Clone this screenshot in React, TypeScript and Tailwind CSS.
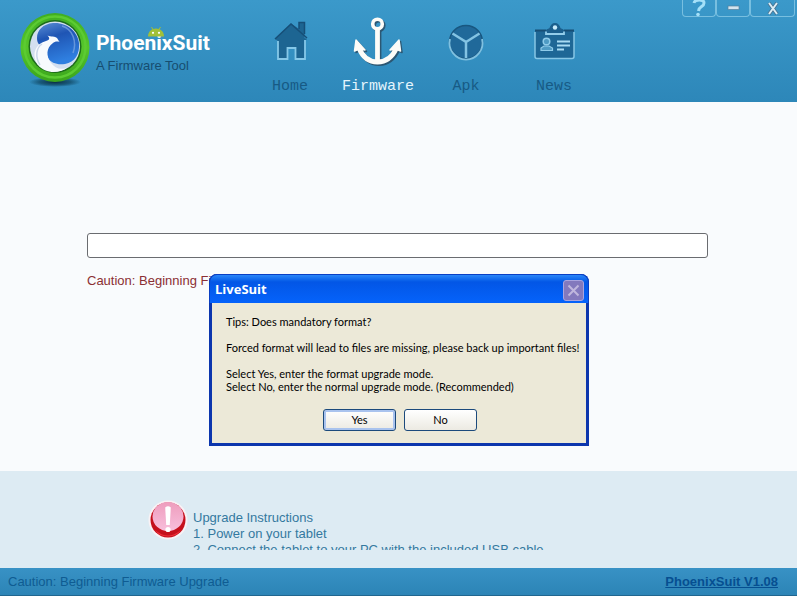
import type { ReactNode } from "react";

function Logo() {
  return (
    <svg width="76" height="78" viewBox="16 10 76 78" aria-hidden="true">
      <defs>
        <linearGradient id="ring" x1="0" y1="0" x2="0" y2="1">
          <stop offset="0" stopColor="#3fae22" />
          <stop offset="0.5" stopColor="#56c62a" />
          <stop offset="1" stopColor="#3aa41c" />
        </linearGradient>
        <linearGradient id="globe" x1="0" y1="0" x2="0.3" y2="1">
          <stop offset="0" stopColor="#5c8fd6" />
          <stop offset="0.4" stopColor="#1f55b4" />
          <stop offset="1" stopColor="#2f7fe0" />
        </linearGradient>
        <radialGradient id="logoShadow">
          <stop offset="0" stopColor="#0b2b3f" />
          <stop offset="0.6" stopColor="#0f4560" stopOpacity="0.7" />
          <stop offset="1" stopColor="#0f4560" stopOpacity="0" />
        </radialGradient>
      </defs>
      <ellipse cx="55" cy="82" rx="26" ry="5" fill="url(#logoShadow)" />
      <circle cx="55" cy="47.500" r="34.500" fill="url(#ring)" />
      <circle cx="55" cy="47" r="30.500" fill="none" stroke="#5ccb32" strokeWidth="2.500" />
      <circle cx="55" cy="46.500" r="26.500" fill="#1d6b1c" />
      <circle cx="55" cy="46.500" r="25" fill="#d3dff0" />
      <path d="M37 38C37 30 43 24 53 23C67 22 78 32 79 43C80 54 75 62 65 64C57 65 51 63 48 58L44 46C40 46 37 44 37 38Z" fill="url(#globe)" />
      <path d="M62 26C73 29 77 42 73 53" fill="none" stroke="#7fa8e2" strokeWidth="1.500" opacity="0.700" />
      <path d="M38 65C31 55 35 44 46 41C50 40 50 38 47.500 35.500C51 37 55 36 57 38L59.500 42C57 41 54 42 53 43C46 48 46 56 51 63C55 68 61 71 68 67C60 74 45 74 38 65Z" fill="#f7fafd" />
      <path d="M42 44C36 48 35 57 40 65" fill="none" stroke="#c9d7ea" strokeWidth="1.500" />
    </svg>
  );
}

function AndroidHead() {
  return (
    <svg className="absolute top-4 left-[51px]" width="18" height="11" viewBox="0 0 18 11" aria-hidden="true">
      <path d="M1 10.500C1 5.500 4.500 2.500 9 2.500S17 5.500 17 10.500Z" fill="#a2c037" />
      <path d="M4.500 1L6 3.500M13.500 1L12 3.500" stroke="#a2c037" />
      <circle cx="6" cy="6.800" r="1.100" fill="#fff" />
      <circle cx="12" cy="6.800" r="1.100" fill="#fff" />
    </svg>
  );
}

function HomeIcon() {
  return (
    <svg width="48" height="50" viewBox="0 0 48 50" fill="none" aria-hidden="true">
      <path d="M38.500 21V6H33V12L25 6.500L9 22L12 24V42H21.500V31H29.500V42H39V24L41 22Z" fill="#1d6592" />
      <path d="M12 24V42H21.500V31H29.500V42H39V23" stroke="#86c8e8" strokeWidth="1.800" />
      <path d="M9 22L25 7L41 21M33 12V5.500H38.500V17" stroke="#164f78" strokeWidth="1.500" />
    </svg>
  );
}

function AnchorShape() {
  return (
    <>
      <circle cx="23.500" cy="7" r="4.800" strokeWidth="3.600" />
      <path d="M23.500 12V45" strokeWidth="4.800" />
      <path d="M5 31C9 41 16 45 23.500 45S38 41 42.500 31" strokeWidth="4.800" />
      <path d="M2 23L0.500 34L5 32L11 33ZM45 23L46.500 34L42 32L36 33Z" strokeWidth="1.500" />
    </>
  );
}

function AnchorIcon() {
  return (
    <svg className="overflow-visible" width="48" height="50" viewBox="0 0 48 50" strokeLinejoin="round" aria-hidden="true">
      <g transform="translate(1.500 1.500)" stroke="#2b4a60" fill="none" opacity="0.800"><AnchorShape /></g>
      <g stroke="#fdfcf8" fill="none"><AnchorShape /></g>
      <path d="M2 23L0.500 34L5 32L11 33ZM45 23L46.500 34L42 32L36 33Z" fill="#fdfcf8" />
    </svg>
  );
}

function ApkIcon() {
  return (
    <svg width="48" height="50" viewBox="0 0 48 50" fill="none" aria-hidden="true">
      <circle cx="24" cy="25" r="16.500" fill="#20699a" stroke="#185780" strokeWidth="1.500" />
      <path d="M8 22A16.500 16.500 0 1 0 40 22" stroke="#7fc0e0" strokeWidth="1.800" />
      <path d="M24 41V25L10.500 16.500M24 25L37.500 16.500" stroke="#83c3e3" strokeWidth="2.500" />
    </svg>
  );
}

function NewsIcon() {
  return (
    <svg width="48" height="50" viewBox="0 0 48 50" fill="none" aria-hidden="true">
      <rect x="5" y="13" width="39" height="28" rx="2" fill="#1e6796" />
      <path d="M5 15V39.500Q5 41.500 7 41.500H42Q44 41.500 44 39.500V15" stroke="#86c6e5" strokeWidth="1.500" />
      <path d="M5 13.500H16M34 13.500H44" stroke="#174f76" strokeWidth="2" />
      <path d="M16 14C16 11.500 19 12 19.500 11C20.500 8 22 6 25 6S29.500 8 30.500 11C31 12 34 11.500 34 14V17H16Z" fill="#1b5f8d" />
      <path d="M16 14.500V17H34V14.500" stroke="#93cdea" strokeWidth="1.800" />
      <circle cx="25" cy="10.500" r="2.200" fill="#c9ecfb" />
      <circle cx="16.500" cy="24.500" r="3.300" stroke="#8fcbe9" strokeWidth="1.500" fill="#4f9bc4" />
      <path d="M11 33.500V31L14 29H19L22.500 31V33.500Z" stroke="#8fcbe9" strokeWidth="1.200" fill="#4f9bc4" />
      <path d="M27 24.500H40M27 28.500H40M27 32.500H34" stroke="#a8dcf3" strokeWidth="1.800" />
    </svg>
  );
}

function AlertIcon() {
  return (
    <svg width="40" height="42" viewBox="0 0 40 42" aria-hidden="true">
      <defs>
        <linearGradient id="gloss" x1="0" y1="0" x2="0" y2="1">
          <stop offset="0" stopColor="#ee9dbd" />
          <stop offset="1" stopColor="#f8bfdc" />
        </linearGradient>
      </defs>
      <circle cx="20" cy="21" r="19.500" fill="#f9f2f5" />
      <circle cx="20" cy="21" r="17.500" fill="#c5101c" />
      <path d="M7 31Q20 42 33 31Q29 37.500 20 37.500T7 31Z" fill="#f0303a" />
      <ellipse cx="20" cy="17.500" rx="15.500" ry="14.500" fill="url(#gloss)" />
      <path d="M17.200 8.500Q20 6 22.800 8.500L21.800 26H18.200Z" fill="#fff" />
      <circle cx="20" cy="30.500" r="2.600" fill="#fff" />
    </svg>
  );
}

function NavItem({ label, icon, active = false }: { label: string; icon: ReactNode; active?: boolean }) {
  return (
    <button type="button" className={`flex w-[88px] flex-col items-center gap-2 font-['Liberation_Mono',monospace] text-[15px] leading-6 ${active ? "text-[#e4f5fd]" : "text-[#175a85]"}`}>
      {icon}
      <span>{label}</span>
    </button>
  );
}

function WindowButton({ label, wide = false, children }: { label: string; wide?: boolean; children: ReactNode }) {
  return (
    <button type="button" aria-label={label} className={`flex h-[17px] items-center justify-center rounded-b-sm border border-t-0 border-[#78bfe0] ${wide ? "w-[45px]" : "w-[34px]"}`}>
      {children}
    </button>
  );
}

function DialogButton({ focused = false, children }: { focused?: boolean; children: ReactNode }) {
  return (
    <button type="button" className={`h-[22px] w-[73px] rounded-[3px] border border-[#1c4a7c] bg-linear-to-b from-white to-[#eceae2] text-center leading-5 ${focused ? "inset-ring-2 inset-ring-[#a9c3ee]" : ""}`}>
      {children}
    </button>
  );
}

function Dialog() {
  return (
    <div className="absolute inset-0 flex items-start justify-center pt-[274px] pl-px">
      <section role="dialog" aria-labelledby="dialog-title" className="w-[380px] rounded-t-lg border-x-[3px] border-b-[3px] border-[#0c36ad] bg-[#0c36ad] font-['Lato',sans-serif] text-[11px] text-black">
        <header className="-mx-[3px] flex h-[29px] items-center justify-between rounded-t-lg border-x border-t border-[#0a3fc4] bg-linear-to-b from-[#2a86f8] via-[#0356e6] via-25% to-[#0563fb] pt-0.5 pr-1 pl-[5px]">
          <h1 id="dialog-title" className="font-['Open_Sans',sans-serif] text-[13px] font-bold text-white">LiveSuit</h1>
          <button type="button" aria-label="Close" className="flex size-[21px] items-center justify-center rounded-[3px] border border-[#a9a4de] bg-[#8379bd]">
            <svg width="13" height="13" viewBox="0 0 13 13" aria-hidden="true"><path d="M1.500 1.500L11.500 11.500M11.500 1.500L1.500 11.500" stroke="#c0b7dd" strokeWidth="2" /></svg>
          </button>
        </header>
        <div className="flex flex-col bg-[#ece9d8] pt-3 pr-3 pb-3 pl-[14px] leading-[13px] whitespace-nowrap">
          <p className="mb-[13px]">Tips: Does mandatory format?</p>
          <p className="mb-[13px]">Forced format will lead to files are missing, please back up important files!</p>
          <p>Select Yes, enter the format upgrade mode.</p>
          <p>Select No, enter the normal upgrade mode. (Recommended)</p>
          <div className="mt-4 flex justify-center gap-2">
            <DialogButton focused>Yes</DialogButton>
            <DialogButton>No</DialogButton>
          </div>
        </div>
      </section>
    </div>
  );
}

export default function App() {
  return (
    <div className="relative flex min-h-screen flex-col bg-[#f9fbfd] font-['Liberation_Sans',sans-serif] text-[13px]">
      <header className="flex h-[102px] items-start bg-linear-to-b from-[#3b99ca] to-[#2d87b9] pl-4">
        <div className="flex w-[230px] pt-[10px]">
          <Logo />
          <div className="relative ml-1 pt-[18px]">
            <AndroidHead />
            <p className="font-['Roboto',sans-serif] text-[21px] leading-[30px] font-bold text-white">PhoenixSuit</p>
            <p className="leading-4 text-[#174d70]">A Firmware Tool</p>
          </div>
        </div>
        <nav className="flex pt-[17px]">
          <NavItem label="Home" icon={<HomeIcon />} />
          <NavItem label="Firmware" icon={<AnchorIcon />} active />
          <NavItem label="Apk" icon={<ApkIcon />} />
          <NavItem label="News" icon={<NewsIcon />} />
        </nav>
        <div className="mr-0.5 ml-auto flex">
          <WindowButton label="Help">
            <svg width="14" height="17" viewBox="0 0 14 17" fill="none" aria-hidden="true"><path d="M2 3C3 -1 12 -1 12 3C12 7 7 6 6.500 11" stroke="#a5e0f8" strokeWidth="3" /><circle cx="6" cy="14.500" r="1.800" fill="#a5e0f8" /></svg>
          </WindowButton>
          <WindowButton label="Minimize">
            <svg width="13" height="6" viewBox="0 0 13 6" aria-hidden="true"><rect x="1" y="1" width="11" height="3.500" fill="#d3e5ef" stroke="#54809c" strokeWidth="0.700" /></svg>
          </WindowButton>
          <WindowButton label="Close window" wide>
            <svg width="12" height="13" viewBox="0 0 12 13" aria-hidden="true"><path d="M2 1L10 12M10 1L2 12" stroke="#476f8d" strokeWidth="3.500" /><path d="M2 1L10 12M10 1L2 12" stroke="#d9edf6" strokeWidth="2" /></svg>
          </WindowButton>
        </div>
      </header>

      <main className="flex-1 px-[87px] pt-[131px]">
        <div role="progressbar" aria-label="Upgrade progress" aria-valuenow={0} className="mr-0.5 h-[25px] rounded-[3px] border border-[#6a6c70] bg-white" />
        <p className="mt-[14px] leading-[18px] text-[#8b2f33]">Caution: Beginning Firmware Upgrade</p>
      </main>

      <section className="flex h-[97px] items-start bg-[#ddebf3] pt-[28px] pl-[148px]">
        <AlertIcon />
        <div className="ml-[5px] h-[51px] overflow-hidden pt-[11px] leading-4 text-[#34799f]">
          <h2>Upgrade Instructions</h2>
          <ol className="list-inside list-decimal">
            <li>Power on your tablet</li>
            <li>Connect the tablet to your PC with the included USB cable</li>
          </ol>
        </div>
      </section>

      <footer className="flex h-7 items-center justify-between border-b border-[#20668f] bg-linear-to-b from-[#3892c5] to-[#2c84b6] pr-[19px] pl-2 text-[#0f5c92]">
        <span>Caution: Beginning Firmware Upgrade</span>
        <a href="#about" className="font-bold text-[#064f91] underline">PhoenixSuit V1.08</a>
      </footer>

      <Dialog />
    </div>
  );
}
